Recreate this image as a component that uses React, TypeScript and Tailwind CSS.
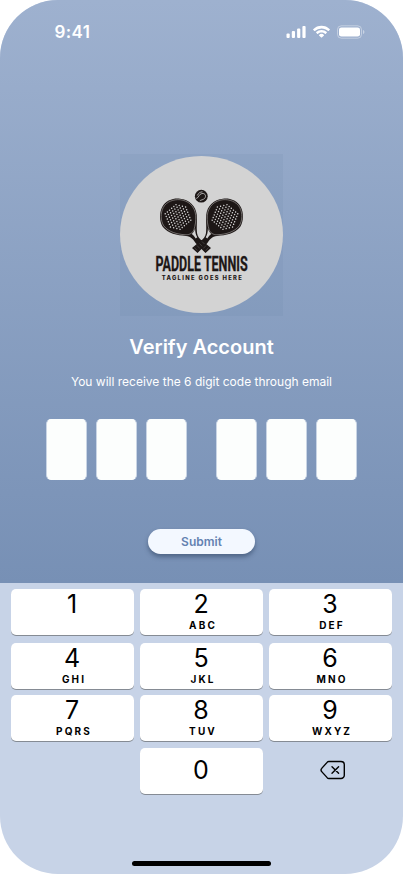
import React from "react";

const dots = Array.from({ length: 13 }, (_, r) =>
  Array.from({ length: 13 }, (_, c) => ({
    x: (c - 6) * 3.3 + (r % 2 ? 1.65 : 0),
    y: (r - 6) * 2.3,
  }))
)
  .flat()
  .filter((d) => (d.x * d.x) / 180 + (d.y * d.y) / 170 < 0.97);

function Racket() {
  return (
    <g>
      <path
        d="M42.200 53C45.500 46.500 53 44 60 44.700C69 45.500 75.800 51.500 76.800 61C77.300 67 76.300 73 77 79C77.600 82.500 79.500 85 82 86.600L91 94L85.500 99L76 89.500C73.500 85.500 71 82.300 66 81.900C57 81.500 48 79.500 42.700 72.800C39.200 67 39.200 59 42.200 53Z"
        fill="#1d1716"
      />
      <path
        d="M43.300 53.400C46.700 47.500 53.500 45.200 60 45.700C68.500 46.500 74.800 52.500 75.700 61.200C76.100 67 75.300 71 73.900 75.800C72 80.400 68 80.900 65 80.700C57 80.300 48.700 78 43.800 71.900C40.400 66.500 40.400 59 43.300 53.400Z"
        fill="none"
        stroke="#a9a6a5"
        strokeWidth=".6"
      />
      <path d="M71.800 80C73.800 78 74.500 76.500 75.100 74.500C75.200 78.500 75.800 81 77.300 83.200L75.700 84.600C74.600 82.700 73.500 81.300 71.800 80Z" fill="#d3d3d3" />
      <g transform="translate(58 63) rotate(14)" fill="#d3d3d3">
        {dots.map((d, i) => (
          <circle key={i} cx={d.x} cy={d.y} r=".74" />
        ))}
      </g>
      <path d="M81 87.500l-2.500 2.500M83.500 89.500l-2.600 2.800M86 91.500l-2.800 3M88.500 93.600l-2.800 3" stroke="#777" strokeWidth=".4" />
    </g>
  );
}

function Logo() {
  return (
    <svg width="163" height="162" viewBox="0 0 163 162" className="block bg-[#6b84a5]/15">
      <ellipse cx="81.500" cy="80.500" rx="81.500" ry="78.500" fill="#d3d3d3" />
      <Racket />
      <g transform="translate(163 0) scale(-1 1)">
        <Racket />
      </g>
      <circle cx="81.300" cy="42.200" r="6.400" fill="#1d1716" />
      <path d="M76.200 44.500C79 44 78.500 40 82 39.500C85.500 39 86.500 42.500 84.500 44.500C83 46 81 45.800 79.800 46.800M77.300 41.500C78.500 39 80 38 82.500 37.800" fill="none" stroke="#d3d3d3" strokeWidth=".75" />
      <text x="35.500" y="117" textLength="144" lengthAdjust="spacing" transform="translate(35.500 0) scale(.64 1) translate(-35.500 0)" fontSize="19.600" fontWeight="700" fill="#1d1716" stroke="#1d1716" strokeWidth=".3" className="font-['Roboto',sans-serif]">PADDLE TENNIS</text>
      <text x="41.700" y="126.300" textLength="80" lengthAdjust="spacing" fontSize="5.800" fontWeight="800" fill="#1d1716" className="font-['Inter',sans-serif]">TAGLINE GOES HERE</text>
    </svg>
  );
}

function StatusBar() {
  return (
    <div className="flex h-[64px] shrink-0 items-center justify-between pr-[38px] pl-[54.500px]">
      <span className="text-[17px] leading-[22px] font-semibold tracking-[0.350px]">9:41</span>
      <svg width="79" height="14" viewBox="0 0 79 14" fill="white">
        <rect x="0.500" y="8.500" width="3.200" height="4.500" rx="1" />
        <rect x="5.800" y="6" width="3.200" height="7" rx="1" />
        <rect x="11.100" y="3.500" width="3.200" height="9.500" rx="1" />
        <rect x="16.400" y="1" width="3.200" height="12" rx="1" />
        <g transform="translate(27 .8)">
          <path d="M8.500 2.600c2.500 0 4.800.9 6.600 2.600.1.100.4.100.5 0l1.200-1.300c.2-.1.200-.4 0-.5A12 12 0 0 0 .200 3.400c-.2.100-.2.400 0 .5l1.200 1.300c.1.100.4.100.5 0a9.600 9.600 0 0 1 6.600-2.600Z" />
          <path d="M8.500 6.700c1.300 0 2.600.5 3.600 1.400.2.100.4.100.5 0l1.300-1.300c.1-.2.100-.4 0-.5a7.800 7.800 0 0 0-10.800 0c-.1.100-.1.300 0 .5l1.300 1.300c.1.100.3.100.5 0 1-.9 2.300-1.400 3.600-1.400Z" />
          <path d="M11 9.600c.1-.1.100-.4 0-.5a3.800 3.800 0 0 0-5 0c-.1.100-.1.400 0 .5l2.200 2.200c.1.200.4.200.6 0L11 9.600Z" />
        </g>
        <rect x="51.500" y=".8" width="24" height="12.400" rx="3.800" fill="none" stroke="white" strokeOpacity=".4" />
        <rect x="53" y="2.400" width="21" height="9.200" rx="2.400" />
        <path d="M77 5v4c.8-.3 1.400-1.100 1.400-2S77.800 5.300 77 5Z" opacity=".45" />
      </svg>
    </div>
  );
}

function Key({ digit, letters }: { digit: string; letters?: string }) {
  return (
    <button className="flex h-[46px] w-[123px] flex-col items-center rounded-[5px] bg-white text-black shadow-[0_1px_0_#858b94]">
      <span className={digit === "0" ? "mt-[7px] pr-px text-[25px] leading-[31px]" : "pr-px text-[25px] leading-[31px]"}>{digit}</span>
      {letters && <span className="-mt-px pl-[3px] text-[10px] leading-[12px] font-bold tracking-[2.100px]">{letters}</span>}
    </button>
  );
}

function CodeGroup() {
  return (
    <div className="flex gap-[9px]">
      {[0, 1, 2].map((i) => (
        <div key={i} className="h-[61px] w-[41px] rounded-[5px] border border-[#c9d5e5] border-y-[#fcfefd] bg-[#fcfefd]" />
      ))}
    </div>
  );
}

export default function App() {
  return (
    <main className="h-[874px] w-[403px] bg-white font-['Inter',sans-serif]">
      <div className="flex h-full flex-col overflow-hidden rounded-[58px] bg-[#c7d3e7]">
        <section className="flex h-[583px] shrink-0 flex-col bg-linear-to-b from-[#9eb1cf] to-[#7790b5] text-white">
          <StatusBar />
          <div className="mt-[90px] flex flex-col items-center">
            <Logo />
            <h1 className="mt-[19px] text-[20px] leading-[24px] font-semibold">Verify Account</h1>
            <p className="mt-[15px] text-[12px] leading-[16px]">You will receive the 6 digit code through email</p>
            <div className="mt-[29px] flex gap-[29px]">
              <CodeGroup />
              <CodeGroup />
            </div>
            <button className="mt-[49px] h-[25px] w-[107px] rounded-full bg-[#f3f8ff] text-[12px] leading-[25px] font-semibold text-[#6482b1] shadow-[0_3px_4px_rgba(40,60,90,0.500)]">Submit</button>
          </div>
        </section>
        <section className="flex flex-1 flex-col items-center pt-[6px]">
          <div className="grid grid-cols-[repeat(3,123px)] grid-rows-[54px_52px_53px_46px] gap-x-[6px]">
            <Key digit="1" />
            <Key digit="2" letters="ABC" />
            <Key digit="3" letters="DEF" />
            <Key digit="4" letters="GHI" />
            <Key digit="5" letters="JKL" />
            <Key digit="6" letters="MNO" />
            <Key digit="7" letters="PQRS" />
            <Key digit="8" letters="TUV" />
            <Key digit="9" letters="WXYZ" />
            <span />
            <Key digit="0" />
            <button className="flex h-[46px] items-center justify-center pl-[5px]" aria-label="Delete">
              <svg width="26" height="20" viewBox="0 0 26 20" fill="none" stroke="black" strokeWidth="1.400" strokeLinecap="round" strokeLinejoin="round" className="-mt-[2px]">
                <path d="M8.800 1.500H21a3.300 3.300 0 0 1 3.300 3.300v10.400a3.300 3.300 0 0 1-3.300 3.300H8.800a2 2 0 0 1-1.400-.6L1.700 11.600a2.200 2.200 0 0 1 0-3.200L7.400 2.100a2 2 0 0 1 1.400-.6Z" />
                <path d="m12 6.700 6.600 6.600m0-6.600L12 13.300" />
              </svg>
            </button>
          </div>
          <div className="mt-auto mb-[8px] h-[5px] w-[139px] rounded-full bg-black" />
        </section>
      </div>
    </main>
  );
}
